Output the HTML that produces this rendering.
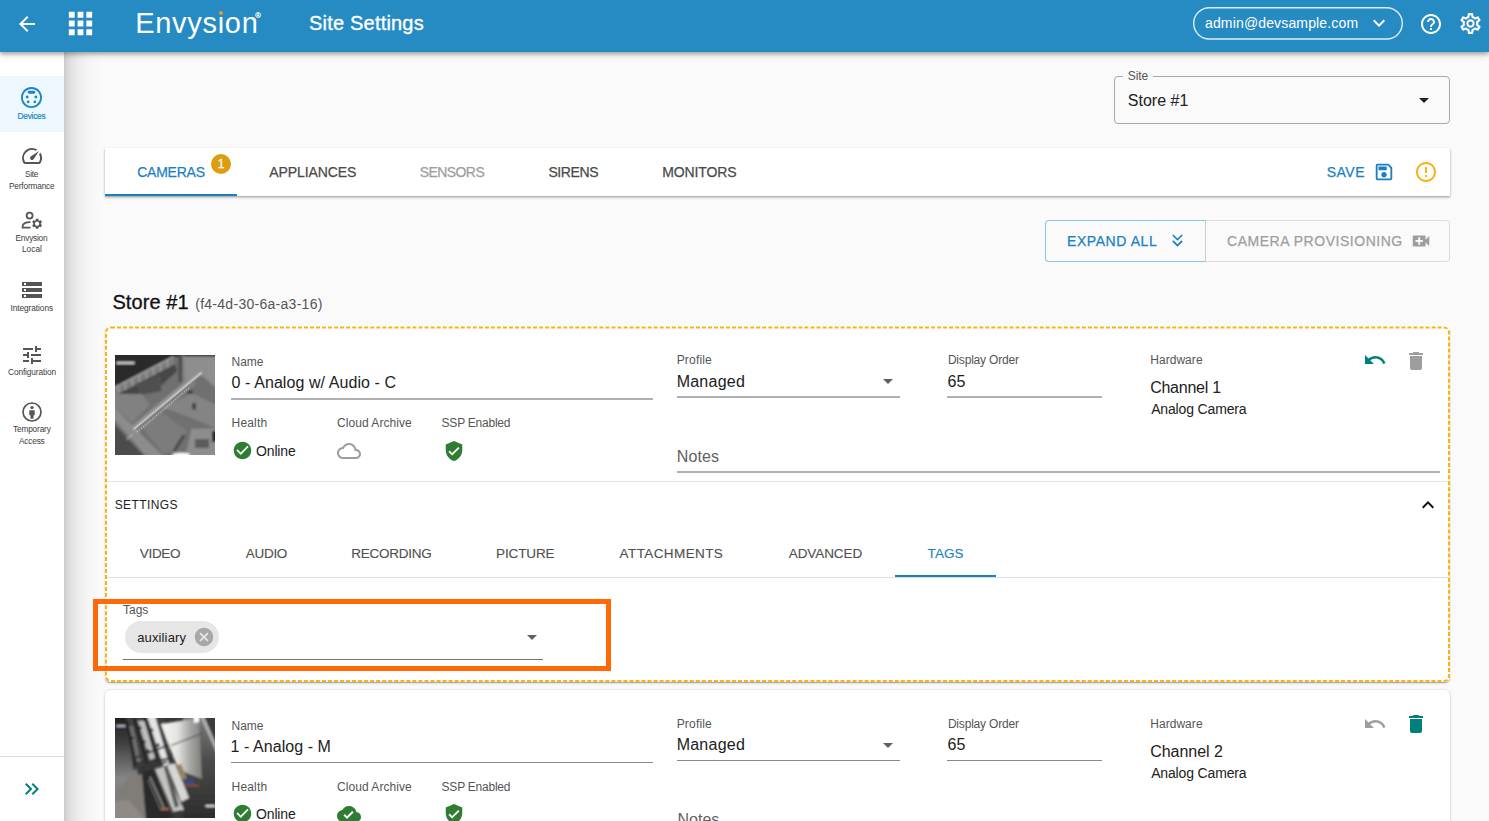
<!DOCTYPE html>
<html lang="en">
<head>
<meta charset="utf-8">
<title>Site Settings</title>
<style>
*{box-sizing:border-box;margin:0;padding:0}
html,body{width:1489px;height:821px;overflow:hidden;background:#fafafa;font-family:"Liberation Sans",sans-serif;color:#212121}
.abs,.t{position:absolute}
.t{white-space:nowrap;line-height:1;display:block}
svg{position:absolute;display:block;overflow:visible}
#main{position:absolute;left:64px;top:52px;width:1425px;height:769px;background:#fafafa;overflow:hidden}
#sideshadow{position:absolute;left:64px;top:52px;width:40px;height:769px;background:linear-gradient(90deg,rgba(0,0,0,.21) 0,rgba(0,0,0,.165) 1px,rgba(0,0,0,.11) 6px,rgba(0,0,0,.055) 14px,rgba(0,0,0,.02) 24px,rgba(0,0,0,0) 37px)}
#side{position:absolute;left:0;top:52px;width:64px;height:769px;background:#fff}
#hdr{position:absolute;left:0;top:0;width:1489px;height:52px;background:#258bc2;box-shadow:0 2px 4px rgba(0,0,0,.28),0 4px 6px rgba(0,0,0,.10)}
.sl{font-size:9px;letter-spacing:-.3px;color:#424242;text-align:center;width:64px;left:0;line-height:12px;white-space:normal}
.sl2{font-size:8.300px;color:#3c3c3c}
.lbl{font-size:12px;color:#555}
.val{font-size:16px;color:#212121}
.ul{position:absolute;height:2px;background:#b0b0b0}
.ul1{position:absolute;height:1px;background:#8a8a8a}
.tab{font-size:14px;font-weight:400;letter-spacing:.6px;color:#4a4a4a;-webkit-text-stroke:.25px}
.card{position:absolute;left:105px;width:1345px;background:#fff;border-radius:5px}
</style>
</head>
<body>
<div id="main"></div>
<!-- site select -->
<div class="abs" style="left:1114px;top:76px;width:336px;height:48px;border:1px solid #a8a8a8;border-radius:4px"></div>
<div class="abs" style="left:1123px;top:74px;width:30px;height:4px;background:#fafafa"></div>
<span class="t lbl" id="sitel" style="left:1127.8px;top:70.400px;letter-spacing:-0.07px">Site</span>
<span class="t val" id="sitev" style="left:1127.8px;top:92.800px;letter-spacing:0.00px">Store #1</span>
<svg style="left:1412px;top:88px" width="24" height="24" viewBox="0 0 24 24"><path fill="#222" d="M7 10l5 5 5-5z"/></svg>
<!-- tab bar -->
<div class="abs" style="left:105px;top:148px;width:1345px;height:48px;background:#fff;box-shadow:0 1px 2px rgba(0,0,0,.30),0 2px 3px rgba(0,0,0,.10)"></div>
<div class="abs" style="left:105px;top:194px;width:132px;height:2px;background:#1b7fc4"></div>
<span class="t tab" id="tb1" style="left:137.2px;top:165px;color:#1b7fc4;letter-spacing:-0.24px">CAMERAS</span>
<div class="abs" style="left:211px;top:153.500px;width:20px;height:20px;border-radius:50%;background:#dd9d10"></div>
<span class="t" style="left:211px;top:157.500px;width:20px;text-align:center;font-size:12px;color:#fff;-webkit-text-stroke:.3px">1</span>
<span class="t tab" id="tb2" style="left:269.2px;top:165px;letter-spacing:-0.09px">APPLIANCES</span>
<span class="t tab" id="tb3" style="left:419.7px;top:165px;color:#9e9e9e;letter-spacing:-0.57px">SENSORS</span>
<span class="t tab" id="tb4" style="left:548.4px;top:165px;letter-spacing:-0.40px">SIRENS</span>
<span class="t tab" id="tb5" style="left:662.2px;top:165px;letter-spacing:-0.11px">MONITORS</span>
<span class="t tab" id="tbsave" style="left:1326.8px;top:164.500px;color:#1b7fc4;letter-spacing:0.46px">SAVE</span>
<svg style="left:1372.600px;top:161px" width="22" height="22" viewBox="0 0 24 24"><path fill="#1b7fc4" d="M17 3H5c-1.110 0-2 .900-2 2v14c0 1.100.890 2 2 2h14c1.100 0 2-.900 2-2V7l-4-4zm2 16H5V5h11.170L19 7.830V19zm-7-7c-1.660 0-3 1.340-3 3s1.340 3 3 3 3-1.340 3-3-1.340-3-3-3zM6 6h9v4H6z"/></svg>
<svg style="left:1414px;top:159.700px" width="24" height="24" viewBox="0 0 24 24"><path fill="#f9b115" d="M11 15h2v2h-2zm0-8h2v6h-2zm.990-5C6.470 2 2 6.480 2 12s4.470 10 9.990 10C17.520 22 22 17.520 22 12S17.520 2 11.990 2zM12 20c-4.420 0-8-3.580-8-8s3.580-8 8-8 8 3.580 8 8-3.580 8-8 8z"/></svg>
<!-- buttons -->
<div class="abs" style="left:1205px;top:220px;width:245px;height:42px;border:1px solid #dcdcdc;border-left:none;border-radius:0 4px 4px 0"></div>
<div class="abs" style="left:1045px;top:220px;width:161px;height:42px;border:1px solid #8fc3e6;border-right-color:#cdcdcd;border-radius:4px 0 0 4px"></div>
<span class="t tab" id="bt1" style="left:1067.0px;top:234px;color:#1b7fc4;letter-spacing:0.57px">EXPAND ALL</span>
<svg style="left:1166.800px;top:230.200px" width="21" height="21" viewBox="0 0 24 24"><path fill="#1b7fc4" d="M18 6.410 16.590 5 12 9.580 7.410 5 6 6.410l6 6z M18 13l-1.410-1.410L12 16.170l-4.590-4.580L6 13l6 6z"/></svg>
<span class="t tab" id="bt2" style="left:1227.0px;top:234px;color:#9e9e9e;letter-spacing:0.53px">CAMERA PROVISIONING</span>
<svg style="left:1410.300px;top:230px" width="22" height="22" viewBox="0 0 24 24"><path fill="#9e9e9e" d="M17 10.500V7c0-.550-.450-1-1-1H4c-.550 0-1 .450-1 1v10c0 .550.450 1 1 1h12c.550 0 1-.450 1-1v-3.500l4 4v-11l-4 4zM14 13h-3v3H9v-3H6v-2h3V8h2v3h3v2z"/></svg>
<!-- heading -->
<span class="t" id="h1" style="left:112.4px;top:292px;font-size:20px;color:#111;-webkit-text-stroke:.3px #111;letter-spacing:0.08px">Store #1</span>
<span class="t" id="h2" style="left:195.2px;top:297px;font-size:14px;color:#555;letter-spacing:0.28px">(f4-4d-30-6a-a3-16)</span>
<!--CARDS-->
<div class="card" style="top:326.400px;height:355.600px;box-shadow:0 1px 1px rgba(0,0,0,.30),0 2px 3px rgba(0,0,0,.08)"></div>
<svg style="left:105px;top:326px" width="1345" height="357"><rect x="1" y="1.400" width="1343" height="353.600" rx="5" ry="5" fill="none" stroke="#fbb30f" stroke-width="2" stroke-dasharray="4 2.030"/></svg>
<svg style="left:115px;top:354.5px" width="100" height="100" viewBox="0 0 100 100"><defs><filter id="bl1" x="-10%" y="-10%" width="120%" height="120%"><feGaussianBlur stdDeviation=".9"/></filter><clipPath id="cp1"><rect width="100" height="100"/></clipPath></defs><rect width="100" height="100" fill="#707070"/><g clip-path="url(#cp1)"><g filter="url(#bl1)">
<polygon points="-2,-2 102,-2 102,1.500 58,1.500 -2,33" fill="#2a2a2a"/>
<polygon points="-2,32.500 58,1 60,9 -2,41.500" fill="#7c7c7c"/>
<g stroke="#a8a8a8" stroke-width="1.100"><line x1="3" y1="30" x2="4" y2="40"/><line x1="10" y1="26.500" x2="11" y2="36.500"/><line x1="17" y1="23" x2="18" y2="33"/><line x1="24" y1="19.500" x2="25" y2="29"/><line x1="31" y1="16" x2="32" y2="25"/><line x1="38" y1="12" x2="39" y2="21"/><line x1="45" y1="8.500" x2="46" y2="17"/><line x1="52" y1="5" x2="53" y2="13"/><line x1="-2" y1="33.500" x2="58" y2="2"/></g>
<polygon points="-2,41.500 60,9 62,16 40,36 22,40 -2,47" fill="#474747"/>
<polygon points="22,28 46,20 46,36 24,40" fill="#505050"/>
<rect x="63.500" y="0" width="5.500" height="27" fill="#505050"/><rect x="67.500" y="0" width="1.500" height="27" fill="#8a8a8a"/>
<polygon points="69,1.500 102,1.500 102,34 86,20 70,28" fill="#8e8e8e"/>
<polygon points="-2,39 27,39 35,50 17,68 -2,51" fill="#818181"/>
<polygon points="-2,51 -2,63 32,102 49,102" fill="#8c8c8c"/>
<polygon points="-2,68 30,102 -2,102" fill="#4c4c4c"/>
<polygon points="27,72 48.500,58 72.500,76 59,96 48,99" fill="#7b7b7b"/>
<polygon points="48.500,53 76.500,38 102,50 102,73.500 76.500,63" fill="#848484"/>
<polygon points="76.500,73.500 102,73.500 102,102 70,102" fill="#8d8d8d"/><rect x="97" y="76" width="5" height="11" fill="#262626"/><rect x="80" y="84" width="14" height="9" fill="#5c5c5c"/>
<rect x="72.500" y="35.500" width="5" height="3.500" fill="#3c3c3c"/><rect x="77" y="48" width="4" height="6.500" fill="#444"/>
<line x1="59" y1="96" x2="69" y2="80" stroke="#454545" stroke-width="2.600"/>
<line x1="16.500" y1="73" x2="85" y2="16" stroke="#8f8f8f" stroke-width="3.400"/><line x1="18.500" y1="74.500" x2="86.500" y2="17.700" stroke="#d6d6d6" stroke-width="1.500"/>
<line x1="22" y1="77" x2="80" y2="28" stroke="#f2f2f2" stroke-width="1.100" stroke-dasharray="1 1.700"/><line x1="12" y1="84" x2="18" y2="79" stroke="#e8e8e8" stroke-width="1.300" stroke-dasharray="1 1.500"/>
<rect x="1.500" y="6.800" width="18" height="2.200" fill="#d2d2d2"/><ellipse cx="66" cy="100" rx="9" ry="2.600" fill="#fff"/></g><line x1="19" y1="74" x2="86.500" y2="17.700" stroke="#dedede" stroke-width="1" opacity=".85"/><line x1="22" y1="77" x2="74" y2="33" stroke="#fff" stroke-width="1" stroke-dasharray=".9 1.900" opacity=".8"/></g></svg>
<span class="t lbl" id="nl1" style="left:231.6px;top:355.5px;letter-spacing:-0.06px">Name</span>
<span class="t val" id="nv1" style="left:231.6px;top:375px;letter-spacing:0.08px">0 - Analog w/ Audio - C</span>
<div class="ul" style="left:231px;top:398px;width:422px"></div>
<span class="t lbl" id="hl1" style="left:231.6px;top:416.5px;letter-spacing:0.16px">Health</span>
<span class="t lbl" id="cl1" style="left:337.0px;top:416.5px;letter-spacing:0.05px">Cloud Archive</span>
<span class="t lbl" id="sl1" style="left:441.6px;top:416.5px;letter-spacing:-0.23px">SSP Enabled</span>
<svg style="left:231.6px;top:439.8px" width="21" height="21" viewBox="0 0 24 24"><path fill="#2e7d32" d="M12 2C6.480 2 2 6.480 2 12s4.480 10 10 10 10-4.480 10-10S17.520 2 12 2zm-2 15l-5-5 1.410-1.410L10 14.170l7.590-7.590L19 8l-9 9z"/></svg>
<span class="t " id="on1" style="left:256.0px;top:443.5px;font-size:14px;color:#212121;letter-spacing:-0.14px">Online</span>
<svg style="left:337px;top:438.7px" width="24" height="24" viewBox="0 0 24 24"><path fill="#9e9e9e" d="M19.350 10.040C18.670 6.590 15.640 4 12 4 9.110 4 6.600 5.640 5.350 8.040 2.340 8.360 0 10.910 0 14c0 3.310 2.690 6 6 6h13c2.760 0 5-2.240 5-5 0-2.640-2.050-4.780-4.650-4.960zM19 18H6c-2.210 0-4-1.790-4-4s1.790-4 4-4h.710C7.370 7.690 9.480 6 12 6c3.040 0 5.500 2.460 5.500 5.500v.500H19c1.660 0 3 1.340 3 3s-1.340 3-3 3z"/></svg>
<svg style="left:443px;top:439.7px" width="22" height="22" viewBox="0 0 24 24"><path fill="#2e7d32" d="M12 1L3 5v6c0 5.550 3.840 10.740 9 12 5.160-1.260 9-6.450 9-12V5l-9-4zm-2 16l-4-4 1.410-1.410L10 14.170l6.590-6.590L18 9l-8 8z"/></svg>
<span class="t lbl" id="pl1" style="left:676.7px;top:354px;letter-spacing:0.18px">Profile</span>
<span class="t val" id="pv1" style="left:676.7px;top:373.7px;letter-spacing:0.23px">Managed</span>
<svg style="left:875.7px;top:369.2px" width="24" height="24" viewBox="0 0 24 24"><path fill="#616161" d="M7 10l5 5 5-5z"/></svg>
<div class="ul" style="left:677px;top:396px;width:222.5px"></div>
<span class="t lbl" id="dl1" style="left:947.9px;top:354px;letter-spacing:-0.19px">Display Order</span>
<span class="t val" id="dv1" style="left:947.5px;top:373.7px;letter-spacing:0px">65</span>
<div class="ul" style="left:947px;top:396px;width:155px"></div>
<span class="t lbl" id="hwl1" style="left:1150.2px;top:354px;letter-spacing:0.05px">Hardware</span>
<span class="t val" id="hw11" style="left:1150.2px;top:380.2px;letter-spacing:-0.26px">Channel 1</span>
<span class="t " id="hw21" style="left:1151.2px;top:402px;font-size:14px;color:#212121;letter-spacing:-0.16px">Analog Camera</span>
<svg style="left:1363.2px;top:348.4px" width="24" height="24" viewBox="0 0 24 24"><path fill="#00807a" d="M12.500 8c-2.650 0-5.050.990-6.900 2.600L2 7v9h9l-3.620-3.620c1.390-1.160 3.160-1.880 5.120-1.880 3.540 0 6.550 2.310 7.600 5.500l2.370-.780C21.080 11.030 17.150 8 12.500 8z"/></svg>
<svg style="left:1403.5px;top:348.7px" width="24" height="24" viewBox="0 0 24 24"><path fill="#9e9e9e" d="M6 19c0 1.100.900 2 2 2h8c1.100 0 2-.900 2-2V7H6v12zM19 4h-3.500l-1-1h-5l-1 1H5v2h14V4z"/></svg>
<span class="t val" id="no1" style="left:676.7px;top:448.5px;color:#616161;letter-spacing:0.16px">Notes</span>
<div class="ul" style="left:677px;top:471px;width:763px"></div>
<div class="abs" style="left:107px;top:480.500px;width:1341px;height:1px;background:#e4e4e4"></div>
<span class="t " id="set" style="left:114.7px;top:499px;font-size:12px;color:#212121;letter-spacing:1.500px;letter-spacing:0.41px">SETTINGS</span>
<svg style="left:1416.2px;top:492.5px" width="24" height="24" viewBox="0 0 24 24"><path fill="#111" d="M12 8l-6 6 1.410 1.410L12 10.830l4.590 4.580L18 14z"/></svg>
<span class="t tab" id="st0" style="left:139.7px;top:546.5px;font-size:13.500px;-webkit-text-stroke:.12px;color:#4f4f4f;letter-spacing:-0.28px">VIDEO</span>
<span class="t tab" id="st1" style="left:245.8px;top:546.5px;font-size:13.500px;-webkit-text-stroke:.12px;color:#4f4f4f;letter-spacing:-0.3px">AUDIO</span>
<span class="t tab" id="st2" style="left:351.2px;top:546.5px;font-size:13.500px;-webkit-text-stroke:.12px;color:#4f4f4f;letter-spacing:-0.24px">RECORDING</span>
<span class="t tab" id="st3" style="left:496.0px;top:546.5px;font-size:13.500px;-webkit-text-stroke:.12px;color:#4f4f4f;letter-spacing:-0.12px">PICTURE</span>
<span class="t tab" id="st4" style="left:619.6px;top:546.5px;font-size:13.500px;-webkit-text-stroke:.12px;color:#4f4f4f;letter-spacing:0.4px">ATTACHMENTS</span>
<span class="t tab" id="st5" style="left:788.8px;top:546.5px;font-size:13.500px;-webkit-text-stroke:.12px;color:#4f4f4f;letter-spacing:-0.09px">ADVANCED</span>
<span class="t tab" id="st6" style="left:927.6px;top:546.5px;font-size:13.500px;-webkit-text-stroke:.12px;color:#1b7fc4;letter-spacing:0.07px">TAGS</span>
<div class="abs" style="left:107px;top:577px;width:1341px;height:1px;background:#dedede"></div>
<div class="abs" style="left:895px;top:575px;width:101px;height:2px;background:#1b7fc4"></div>
<span class="t lbl" id="tgl" style="left:123px;top:603.5px;">Tags</span>
<div class="abs" style="left:125px;top:621px;width:94px;height:32px;border-radius:16px;background:#e6e6e6"></div>
<span class="t " id="aux" style="left:137.2px;top:630.5px;font-size:13px;color:#212121;letter-spacing:0.14px">auxiliary</span>
<svg style="left:192.5px;top:626px" width="22" height="22" viewBox="0 0 24 24"><path fill="#a8a8a8" d="M12 2C6.470 2 2 6.470 2 12s4.470 10 10 10 10-4.470 10-10S17.530 2 12 2zm5 13.590L15.590 17 12 13.410 8.410 17 7 15.590 10.590 12 7 8.410 8.410 7 12 10.590 15.590 7 17 8.410 13.410 12 17 15.590z"/></svg>
<svg style="left:519.9px;top:624.5px" width="24" height="24" viewBox="0 0 24 24"><path fill="#616161" d="M7 10l5 5 5-5z"/></svg>
<div class="ul1" style="left:123px;top:659px;width:420px;background:#757575"></div>
<div class="abs" style="left:93px;top:599px;width:518px;height:72px;border:5px solid #ff6906"></div>
<div class="card" style="top:690px;height:400px;box-shadow:0 0 2px rgba(0,0,0,.18),0 1px 3px rgba(0,0,0,.12)"></div>
<svg style="left:115px;top:718.0px" width="100" height="100" viewBox="0 0 100 100"><defs><filter id="bl2" x="-10%" y="-10%" width="120%" height="120%"><feGaussianBlur stdDeviation=".9"/></filter><clipPath id="cp2"><rect width="100" height="100"/></clipPath>
<linearGradient id="g2a" x1="0" y1="0" x2="0" y2="1"><stop offset="0" stop-color="#1e1e1e"/><stop offset=".25" stop-color="#3e3e3e"/><stop offset=".6" stop-color="#858585"/><stop offset=".85" stop-color="#7c7a77"/><stop offset="1" stop-color="#8c8882"/></linearGradient>
<linearGradient id="g2b" x1="0" y1="0" x2="1" y2="0"><stop offset="0" stop-color="#f6f6f2"/><stop offset=".4" stop-color="#e4e4e0"/><stop offset=".7" stop-color="#a8a8a5"/><stop offset="1" stop-color="#7e7e7c"/></linearGradient>
<linearGradient id="g2c" x1="0" y1="0" x2="0" y2="1"><stop offset="0" stop-color="#7c7c7c"/><stop offset=".45" stop-color="#4a4a4a"/><stop offset="1" stop-color="#2c2c2c"/></linearGradient></defs>
<rect width="100" height="100" fill="#383838"/><g clip-path="url(#cp2)"><g filter="url(#bl2)">
<rect x="68" y="-2" width="34" height="104" fill="url(#g2c)"/>
<polygon points="-2,-2 12,-2 32,102 -2,102" fill="url(#g2a)"/>
<polygon points="11,-2 48,-2 56,46 18,52" fill="#404040"/>
<polygon points="32,-2 40,-2 54,46 49,49" fill="#e4e4e4"/><polygon points="23,3 30,3 40,40 35,42" fill="#bdbdbd"/><polygon points="14,8 18,8 26,44 22,46" fill="#6e6e6e"/>
<g stroke="#1c1c1c" stroke-width="2.200"><line x1="19" y1="0" x2="32" y2="46"/><line x1="29" y1="-2" x2="43" y2="44"/><line x1="12" y1="4" x2="21" y2="48"/></g>
<g fill="#222"><circle cx="25" cy="10" r="1.700"/><circle cx="29" cy="24" r="1.700"/><circle cx="33" cy="33" r="1.700"/><circle cx="43" cy="27" r="1.700"/><circle cx="17" cy="20" r="1.500"/><circle cx="37" cy="12" r="1.400"/></g>
<polygon points="46,6 84,0 87,61 64,52 54,28" fill="url(#g2b)"/>
<polygon points="79,-2 84,-2 84,4 79,5" fill="#fff"/>
<line x1="56" y1="27.500" x2="87" y2="15.500" stroke="#4c4c4c" stroke-width="1.200"/>
<polygon points="85,-2 89,-2 102,28 102,36" fill="#b0b0b0"/><polygon points="89,-2 102,-2 102,28" fill="#3a3a3a"/>
<g stroke="#2e2e2e" stroke-width="1.800"><line x1="17" y1="41" x2="54" y2="27"/><line x1="18" y1="46" x2="59" y2="40"/><line x1="24" y1="50" x2="52" y2="44"/></g>
<polygon points="14,59 27,56 31,102 -2,102 -2,80" fill="#807d79"/><polygon points="-2,84 14,82 30,102 -2,102" fill="#8f8a83"/>
<polygon points="27,54 40,51 58,102 31,102" fill="#2b2b2b"/><line x1="35" y1="59" x2="49" y2="90" stroke="#9a9a9a" stroke-width="1.300"/><line x1="33" y1="62" x2="46" y2="92" stroke="#7a7a7a" stroke-width="1"/>
<polygon points="40,51 49,48.500 69,92 58,94" fill="#c2c2be"/><polygon points="49,50 53,49 64,88 60,90" fill="#5a5a5a"/><polygon points="52,47 60,45 74,80 66,84" fill="#d6d6d2"/>
<polygon points="62,47 66,46 72,60 67,62" fill="#9a8260"/><rect x="69" y="61" width="10" height="5.500" fill="#3a4a78"/><rect x="71" y="66.500" width="13" height="2" fill="#8a4a40"/><rect x="46" y="90" width="8" height="2.200" fill="#a8674a"/>
<rect x="90.500" y="87" width="10" height="2" fill="#d8d8d8"/><rect x="1.500" y="7" width="9" height="2" fill="#b0b0c4"/></g></g></svg>
<span class="t lbl" id="nl2" style="left:231.6px;top:719.6px;letter-spacing:-0.06px">Name</span>
<span class="t val" id="nv2" style="left:230.6px;top:738.5px;letter-spacing:0.05px">1 - Analog - M</span>
<div class="ul1" style="left:231px;top:762.0px;width:422px"></div>
<span class="t lbl" id="hl2" style="left:231.6px;top:780.6px;letter-spacing:0.16px">Health</span>
<span class="t lbl" id="cl2" style="left:337.0px;top:780.6px;letter-spacing:0.05px">Cloud Archive</span>
<span class="t lbl" id="sl2" style="left:441.6px;top:780.6px;letter-spacing:-0.23px">SSP Enabled</span>
<svg style="left:231.6px;top:803.3px" width="21" height="21" viewBox="0 0 24 24"><path fill="#2e7d32" d="M12 2C6.480 2 2 6.480 2 12s4.480 10 10 10 10-4.480 10-10S17.520 2 12 2zm-2 15l-5-5 1.410-1.410L10 14.170l7.590-7.590L19 8l-9 9z"/></svg>
<span class="t " id="on2" style="left:256.0px;top:807.0px;font-size:14px;color:#212121;letter-spacing:-0.14px">Online</span>
<svg style="left:337px;top:802.2px" width="24" height="24" viewBox="0 0 24 24"><path fill="#2e7d32" d="M19.350 10.040C18.670 6.590 15.640 4 12 4 9.110 4 6.600 5.640 5.350 8.040 2.340 8.360 0 10.910 0 14c0 3.310 2.690 6 6 6h13c2.760 0 5-2.240 5-5 0-2.640-2.050-4.780-4.650-4.960zM10 17l-3.500-3.500 1.410-1.410L10 14.170 15.180 9l1.410 1.410L10 17z"/></svg>
<svg style="left:443px;top:803.2px" width="22" height="22" viewBox="0 0 24 24"><path fill="#2e7d32" d="M12 1L3 5v6c0 5.550 3.840 10.740 9 12 5.160-1.260 9-6.450 9-12V5l-9-4zm-2 16l-4-4 1.410-1.410L10 14.170l6.590-6.590L18 9l-8 8z"/></svg>
<span class="t lbl" id="pl2" style="left:676.7px;top:718.1px;letter-spacing:0.18px">Profile</span>
<span class="t val" id="pv2" style="left:676.7px;top:737.2px;letter-spacing:0.23px">Managed</span>
<svg style="left:875.7px;top:732.7px" width="24" height="24" viewBox="0 0 24 24"><path fill="#616161" d="M7 10l5 5 5-5z"/></svg>
<div class="ul1" style="left:677px;top:760.0px;width:222.5px"></div>
<span class="t lbl" id="dl2" style="left:947.9px;top:718.1px;letter-spacing:-0.19px">Display Order</span>
<span class="t val" id="dv2" style="left:947.5px;top:737.2px;letter-spacing:0px">65</span>
<div class="ul1" style="left:947px;top:760.0px;width:155px"></div>
<span class="t lbl" id="hwl2" style="left:1150.2px;top:718.1px;letter-spacing:0.05px">Hardware</span>
<span class="t val" id="hw12" style="left:1150.2px;top:743.7px;letter-spacing:-0.04px">Channel 2</span>
<span class="t " id="hw22" style="left:1151.2px;top:765.5px;font-size:14px;color:#212121;letter-spacing:-0.16px">Analog Camera</span>
<svg style="left:1363.2px;top:711.9px" width="24" height="24" viewBox="0 0 24 24"><path fill="#9e9e9e" d="M12.500 8c-2.650 0-5.050.990-6.900 2.600L2 7v9h9l-3.620-3.620c1.390-1.160 3.160-1.880 5.120-1.880 3.540 0 6.550 2.310 7.600 5.500l2.370-.780C21.080 11.030 17.150 8 12.500 8z"/></svg>
<svg style="left:1403.5px;top:712.2px" width="24" height="24" viewBox="0 0 24 24"><path fill="#00807a" d="M6 19c0 1.100.900 2 2 2h8c1.100 0 2-.900 2-2V7H6v12zM19 4h-3.500l-1-1h-5l-1 1H5v2h14V4z"/></svg>
<span class="t val" id="no2" style="left:677.5px;top:812.0px;color:#616161">Notes</span>
<div class="ul1" style="left:677px;top:835.0px;width:763px"></div>
<!--/CARDS-->
<div id="sideshadow"></div>
<div id="side">
<div class="abs" style="left:0;top:24px;width:64px;height:56px;background:#ecf7fe"></div>
<svg style="left:20.400px;top:34.100px" width="23" height="23" viewBox="0 0 24 24"><path fill="#1b86c6" d="M8 6.500c0-.830.670-1.500 1.500-1.500h5c.830 0 1.500.670 1.500 1.500S15.330 8 14.500 8h-5C8.670 8 8 7.330 8 6.500zM15 11.500c0 .830.670 1.500 1.500 1.500s1.500-.670 1.500-1.500-.670-1.500-1.500-1.500-1.500.670-1.500 1.500zM8.500 15c-.830 0-1.500.670-1.500 1.500S7.670 18 8.500 18s1.500-.670 1.500-1.500S9.330 15 8.500 15zM12 1C5.930 1 1 5.930 1 12s4.930 11 11 11 11-4.930 11-11S18.070 1 12 1zm0 20c-4.960 0-9-4.040-9-9s4.040-9 9-9 9 4.040 9 9-4.040 9-9 9zM7.500 10c-.830 0-1.500.670-1.500 1.500S6.670 13 7.500 13 9 12.330 9 11.500 8.330 10 7.500 10zm8 5c-.830 0-1.500.670-1.500 1.500s.670 1.500 1.500 1.500 1.500-.670 1.500-1.500-.670-1.500-1.500-1.500z"/></svg>
<span class="t sl2" id="s1" style="left:17.5px;top:59.5px;color:#1b86c6;-webkit-text-stroke:.2px #1b86c6;letter-spacing:-0.23px">Devices</span>
<svg style="left:20px;top:92px" width="24" height="24" viewBox="0 0 24 24"><path fill="#555" d="M20.380 8.570l-1.230 1.850a8 8 0 0 1-.220 7.580H5.070A8 8 0 0 1 15.580 6.850l1.850-1.230A10 10 0 0 0 3.350 19a2 2 0 0 0 1.720 1h13.850a2 2 0 0 0 1.740-1 10 10 0 0 0-.270-10.440zm-9.790 6.840a2 2 0 0 0 2.830 0l5.660-8.490-8.490 5.660a2 2 0 0 0 0 2.830z"/></svg>
<span class="t sl2" id="s2a" style="left:25.0px;top:117.7px;letter-spacing:-0.32px">Site</span><span class="t sl2" id="s2b" style="left:9.0px;top:129.6px;letter-spacing:-0.18px">Performance</span>
<svg style="left:20px;top:156px" width="24" height="24" viewBox="0 0 24 24"><g fill="none" stroke="#555" stroke-width="1.800"><circle cx="9.600" cy="7.600" r="3"/><path d="M10.500 14.200C6 13.900 2.600 15.600 2.600 18.300V19.600H10.500"/></g><path transform="translate(17.100 15.700) scale(.840) translate(-17.240 -16)" fill="#555" d="M21.700 16.600c.030-.200.040-.400.040-.600s-.020-.410-.050-.600l1.270-.990c.110-.090.140-.250.070-.380l-1.200-2.080c-.070-.130-.230-.180-.370-.130l-1.490.600c-.310-.240-.650-.440-1.010-.590l-.230-1.590c-.020-.140-.140-.250-.290-.250h-2.400c-.150 0-.270.110-.290.250l-.230 1.590c-.360.150-.700.350-1.010.590l-1.490-.600c-.140-.050-.300 0-.370.130l-1.200 2.080c-.080.130-.040.290.070.380l1.270.990c-.030.190-.050.400-.050.600s.020.410.050.600l-1.270.990c-.110.090-.140.250-.070.380l1.200 2.080c.070.130.230.180.370.130l1.490-.600c.310.240.650.440 1.010.590l.230 1.590c.020.140.140.250.290.250h2.400c.150 0 .270-.110.290-.250l.230-1.590c.360-.150.700-.350 1.010-.590l1.490.600c.140.050.300 0 .370-.130l1.200-2.080c.070-.130.040-.290-.070-.380l-1.260-.990zM17.240 18.500c-1.380 0-2.500-1.120-2.500-2.500s1.120-2.500 2.500-2.500 2.500 1.120 2.500 2.500-1.120 2.500-2.500 2.500z"/></svg>
<span class="t sl2" id="s3a" style="left:15.5px;top:181.5px;letter-spacing:-0.22px">Envysion</span><span class="t sl2" id="s3b" style="left:22.0px;top:193.3px;letter-spacing:0.00px">Local</span>
<svg style="left:20px;top:226px" width="24" height="24" viewBox="0 0 24 24"><path fill="#555" d="M2 20h20v-4H2v4zm2-3h2v2H4v-2zM2 4v4h20V4H2zm4 3H4V5h2v2zm-4 7h20v-4H2v4zm2-3h2v2H4v-2z"/></svg>
<span class="t sl2" id="s4" style="left:10.5px;top:251.7px;letter-spacing:-0.07px">Integrations</span>
<svg style="left:20px;top:291px" width="24" height="24" viewBox="0 0 24 24"><path fill="#555" d="M3 17v2h6v-2H3zM3 5v2h10V5H3zm10 16v-2h8v-2h-8v-2h-2v6h2zM7 9v2H3v2h4v2h2V9H7zm14 4v-2H11v2h10zm-6-4h2V7h4V5h-4V3h-2v6z"/></svg>
<span class="t sl2" id="s5" style="left:8.0px;top:315.5px;letter-spacing:-0.11px">Configuration</span>
<svg style="left:20px;top:347.500px" width="24" height="24" viewBox="0 0 24 24"><circle cx="12" cy="12" r="9" fill="none" stroke="#555" stroke-width="1.700"/><circle cx="12" cy="7.600" r="1.700" fill="#555"/><path fill="#555" d="M9.300 10.200h5.400v5h-1.200v3.600h-3v-3.600H9.300z"/></svg>
<span class="t sl2" id="s6a" style="left:13.0px;top:373.2px;letter-spacing:-0.17px">Temporary</span><span class="t sl2" id="s6b" style="left:19.0px;top:385.1px;letter-spacing:-0.20px">Access</span>
<div class="abs" style="left:0;top:704px;width:64px;height:1px;background:#dcdcdc"></div>
<svg style="left:20px;top:725px" width="24" height="24" viewBox="0 0 24 24"><path fill="#00807a" d="M6.410 6 5 7.410 9.580 12 5 16.590 6.410 18l6-6z M13 6l-1.410 1.410L16.170 12l-4.580 4.590L13 18l6-6z"/></svg>
</div>
<div id="hdr">
<svg style="left:15px;top:11.5px" width="24" height="24" viewBox="0 0 24 24"><path fill="#fff" d="M20 11H7.830l5.590-5.590L12 4l-8 8 8 8 1.410-1.410L7.830 13H20v-2z"/></svg>
<svg style="left:63px;top:6px" width="35" height="35" viewBox="0 0 24 24"><path fill="#fff" d="M4 8h4V4H4v4zm6 12h4v-4h-4v4zm-6 0h4v-4H4v4zm0-6h4v-4H4v4zm6 0h4v-4h-4v4zm6-10v4h4V4h-4zm-6 4h4V4h-4v4zm6 6h4v-4h-4v4zm0 6h4v-4h-4v4z"/></svg>
<span class="t" id="logo" style="left:135.200px;top:8.900px;font-size:29px;color:#fff;letter-spacing:.7px">Envysion</span>

<span class="abs" id="idotcover" style="left:218px;top:9px;width:8px;height:5.400px;background:#258bc2"></span><span class="abs" id="idot" style="left:219.200px;top:11.450px;width:3.900px;height:3.900px;border-radius:50%;background:#f7941d"></span>
<span class="t" style="left:255.200px;top:11.500px;font-size:7.500px;color:#fff;-webkit-text-stroke:.2px #fff">®</span>
<span class="t" id="ttl" style="left:309px;top:13px;font-size:20px;color:#fff;letter-spacing:.2px;-webkit-text-stroke:.35px #fff">Site Settings</span>
<svg style="left:1193px;top:7px" width="210" height="33"><rect x=".700" y=".700" width="208.600" height="31.300" rx="15.650" fill="none" stroke="rgba(255,255,255,.85)" stroke-width="1.400"/></svg>
<span class="t" id="email" style="left:1205px;top:15.500px;font-size:14px;color:#fff;letter-spacing:.15px">admin@devsample.com</span>
<svg style="left:1367px;top:10.800px" width="24" height="24" viewBox="0 0 24 24"><path fill="#fff" d="M16.590 8.590L12 13.170 7.410 8.590 6 10l6 6 6-6z"/></svg>
<svg style="left:1419px;top:11.500px" width="24" height="24" viewBox="0 0 24 24"><path fill="#fff" d="M11 18h2v-2h-2v2zm1-16C6.480 2 2 6.480 2 12s4.480 10 10 10 10-4.480 10-10S17.520 2 12 2zm0 18c-4.410 0-8-3.590-8-8s3.590-8 8-8 8 3.590 8 8-3.590 8-8 8zm0-14c-2.210 0-4 1.790-4 4h2c0-1.100.900-2 2-2s2 .900 2 2c0 2-3 1.750-3 5h2c0-2.250 3-2.500 3-5 0-2.210-1.790-4-4-4z"/></svg>
<svg style="left:1457.800px;top:11.200px" width="25" height="25" viewBox="0 0 24 24"><path fill="#fff" d="M19.430 12.980c.040-.320.070-.640.070-.980 0-.340-.030-.660-.070-.980l2.110-1.650c.190-.150.240-.420.120-.640l-2-3.460c-.090-.160-.260-.250-.440-.250-.060 0-.120.010-.170.030l-2.490 1c-.520-.400-1.080-.730-1.690-.980l-.380-2.650C14.460 2.180 14.250 2 14 2h-4c-.250 0-.460.180-.490.420l-.380 2.650c-.610.250-1.170.590-1.690.980l-2.490-1c-.060-.020-.120-.030-.180-.030-.170 0-.340.090-.430.250l-2 3.460c-.130.220-.070.490.120.640l2.110 1.650c-.040.320-.070.650-.070.980 0 .330.030.660.070.980l-2.110 1.650c-.190.150-.240.420-.120.640l2 3.460c.090.160.260.250.440.250.060 0 .120-.010.170-.030l2.490-1c.520.400 1.080.730 1.690.980l.380 2.650c.030.240.240.420.490.420h4c.250 0 .460-.180.490-.420l.380-2.650c.610-.250 1.170-.590 1.690-.980l2.490 1c.060.020.120.030.180.030.170 0 .340-.090.430-.250l2-3.460c.120-.220.070-.490-.120-.640l-2.110-1.650zm-1.980-1.710c.040.310.050.520.050.730 0 .210-.020.430-.050.730l-.140 1.130.890.700 1.080.840-.700 1.210-1.270-.510-1.040-.420-.900.680c-.430.320-.840.560-1.250.730l-1.060.430-.160 1.130-.200 1.350h-1.400l-.190-1.350-.160-1.130-1.060-.430c-.430-.180-.830-.410-1.230-.710l-.910-.700-1.060.430-1.270.510-.700-1.210 1.080-.840.890-.700-.140-1.130c-.030-.310-.050-.540-.050-.740s.020-.430.050-.730l.140-1.130-.890-.700-1.080-.840.700-1.210 1.270.510 1.040.420.900-.680c.430-.320.840-.560 1.250-.730l1.060-.430.160-1.130.200-1.350h1.390l.190 1.350.160 1.130 1.060.430c.430.180.830.410 1.230.710l.910.700 1.060-.430 1.270-.510.700 1.210-1.070.850-.890.700.140 1.130zM12 8c-2.210 0-4 1.790-4 4s1.790 4 4 4 4-1.790 4-4-1.790-4-4-4zm0 6c-1.100 0-2-.900-2-2s.900-2 2-2 2 .900 2 2-.900 2-2 2z"/></svg>
</div>
</body>
</html>
